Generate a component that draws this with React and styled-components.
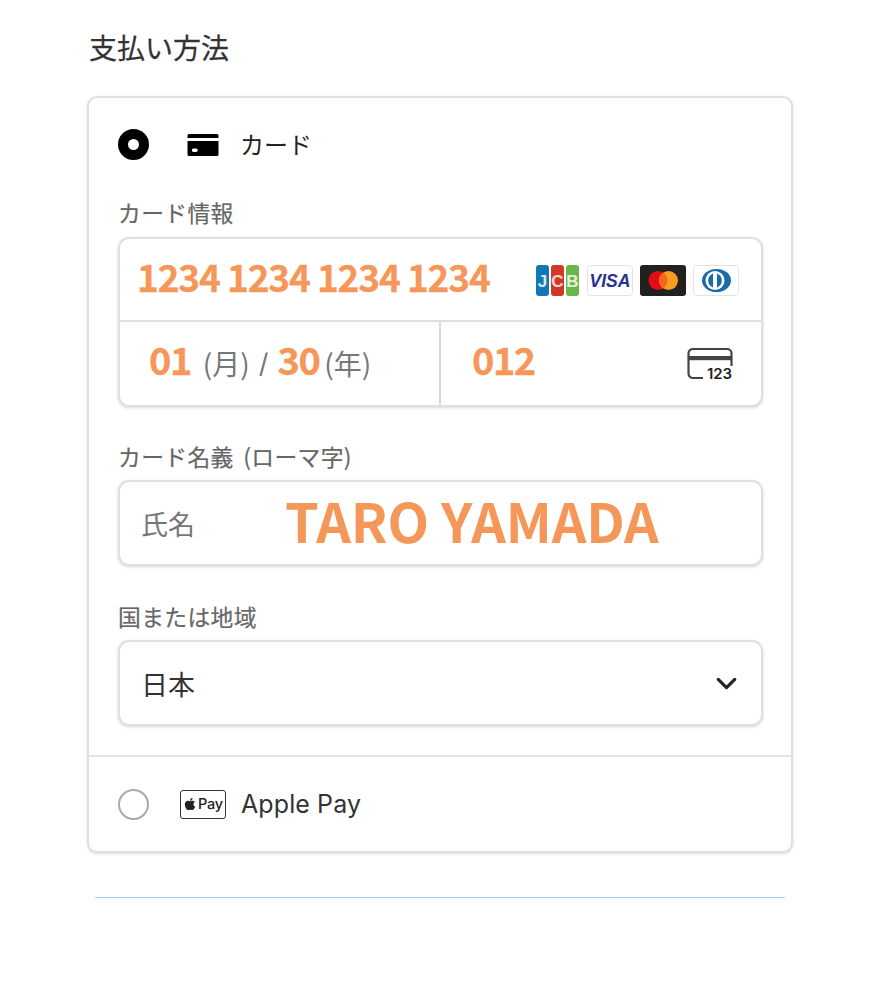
import React from "react";
import styled, { createGlobalStyle } from "styled-components";
import { FaApple } from "react-icons/fa";
import { FiChevronDown } from "react-icons/fi";

const Global = createGlobalStyle`
  html, body { margin: 0; padding: 0; background: #fff; }
  body { font-family: "Inter", "Noto Sans CJK JP", sans-serif; }
`;
const JP = `"Noto Sans CJK JP", sans-serif`;
const ORANGE = "#f6975a";

const Page = styled.div`
  width: 880px; height: 1000px; box-sizing: border-box; padding: 28px 87px 0 87px; overflow: hidden; background:#fff;
`;
const Title = styled.h1`
  margin: 0 0 30px 2px; font: 400 28px/38px ${JP}; color: #333; height: 38px; -webkit-text-stroke: 0.25px #333;
`;
const Card = styled.section`
  height: 757px; box-sizing: border-box; border: 2px solid #e0e0e0; border-radius: 10px;
  box-shadow: 0 1px 3px rgba(0,0,0,.14); background: #fff; display: flex; flex-direction: column;
`;
const CardBody = styled.div`
  height: 659px; box-sizing: border-box; padding: 31px 28px 0 29px; border-bottom: 2px solid #e4e4e4;
`;
const MethodRow = styled.div`
  display: flex; align-items: center; height: 31px; margin-bottom: 40px; color: #222;
  font: 400 24px/29px ${JP};
`;
const MethodName = styled.span`
  margin: 0 0 2px -1px;
`;
const RadioOn = styled.span`
  width: 31px; height: 31px; box-sizing: border-box; border-radius: 50%; border: 10px solid #000; background: #fff; margin-right: 38px; flex: none;
`;
const RadioOff = styled.span`
  width: 31px; height: 31px; box-sizing: border-box; border-radius: 50%; border: 2px solid #a9a9a9; background: #fff; flex: none;
`;
const CardGlyph = styled.svg`
  width: 32px; height: 24px; margin-right: 22px; flex: none;
`;
const Label = styled.div`
  font: 400 22.8px/26px ${JP}; color: #666; height: 26px; margin-bottom: ${p => p.$gap}px; white-space: nowrap;
  letter-spacing: 0.35px; word-spacing: 4px; -webkit-text-stroke: 0.2px #666;
`;
const Group = styled.div`
  border: 2px solid #e0e0e0; border-radius: 11px; box-shadow: 0 1px 3px rgba(0,0,0,.16); background: #fff;
  height: 170px; box-sizing: border-box; display: flex; flex-direction: column; margin-bottom: 37px;
`;
const NumberRow = styled.div`
  height: 83px; box-sizing: border-box; flex: none; border-bottom: 2px solid #e0e0e0; display: flex; align-items: center;
  justify-content: space-between; padding: 0 22px 0 17px;
`;
const BigNum = styled.span`
  color: ${ORANGE}; font: 700 ${p => p.$size || 37}px/1 ${JP}; letter-spacing: ${p => p.$track ?? -1.15}px; white-space: nowrap;
  margin: 0 0 ${p => p.$lift ?? 7}px ${p => p.$left || 0}px; -webkit-text-stroke: 0.3px ${ORANGE};
`;
const Logos = styled.div`
  display: flex; align-items: center; gap: 7px; margin-top: 2px;
`;
const Logo = styled.svg`
  width: 46px; height: 31px; display: block; flex: none;
`;
const SplitRow = styled.div`
  flex: 1; display: flex; min-height: 0;
`;
const Expiry = styled.div`
  width: 321px; box-sizing: border-box; border-right: 2px solid #dadada; display: flex; align-items: center; padding-left: 29px;
`;
const Hint = styled.span`
  color: #777; font: 400 28px/1 ${JP}; white-space: pre; margin: 0 0 2px ${p => p.$left || 0}px;
`;
const Slash = styled.span`
  color: #777; font: 400 27px/1 "Inter", sans-serif; margin-left: 9px;
`;
const Cvc = styled.div`
  flex: 1; display: flex; align-items: center; justify-content: space-between; padding: 0 28px 0 31px;
`;
const CvcIcon = styled.svg`
  width: 46px; height: 36px; display:block; margin-top: 5px; flex: none;
`;
const Field = styled.div`
  height: 86px; box-sizing: border-box; border: 2px solid #e0e0e0; border-radius: 11px; box-shadow: 0 1px 3px rgba(0,0,0,.16);
  display: flex; align-items: center; padding: 0 18px 0 21px; background:#fff; margin-bottom: ${p => p.$gap || 0}px; justify-content: ${p => p.$between ? "space-between" : "flex-start"};
`;
const Placeholder = styled.span`
  font: 400 27px/1 ${JP}; color: #777; width: 144px; flex: none;
`;
const NameValue = styled.span`
  font: 700 54px/1 ${JP}; color: ${ORANGE}; white-space: nowrap; letter-spacing: -0.1px; margin-bottom: 6px;
`;
const Value = styled.span`
  font: 400 27px/1 ${JP}; color: #333;
`;
const ApplePayRow = styled.div`
  flex: 1; display: flex; align-items: center; padding: 0 0 0 29px; font: 400 25px/1 "Inter", sans-serif; color: #333; letter-spacing: 0.1px;
`;
const PayMark = styled.span`
  width: 46px; height: 29px; box-sizing: border-box; border: 1.5px solid #333; border-radius: 3px; margin: 0 15px 0 31px;
  display: inline-flex; align-items: center; justify-content: center; gap: 1px; font: 500 14.5px/1 "Inter", sans-serif; color: #222; letter-spacing: -0.2px;
`;
const BlueLine = styled.div`
  height: 1px; background: #a8d2f0; margin: 44px 8px 0 8px;
`;

export default function App() {
  return (
    <Page>
      <Global />
      <Title>支払い方法</Title>
      <Card>
        <CardBody>
          <MethodRow>
            <RadioOn />
            <CardGlyph viewBox="0 0 32 24">
              <path fill="#000" d="M2 1h28a1.5 1.5 0 0 1 1.5 1.5V5H.5V2.5A1.5 1.5 0 0 1 2 1z" />
              <path fill="#000" fillRule="evenodd" d="M.5 8h31v13.5a1.5 1.5 0 0 1-1.5 1.5H2a1.5 1.5 0 0 1-1.5-1.5zM6.5 15.5a1.7 1.7 0 0 0 0 3.4h2.5a1.7 1.7 0 0 0 0-3.4z" />
            </CardGlyph>
            <MethodName>カード</MethodName>
          </MethodRow>
          <Label $gap={11}>カード情報</Label>
          <Group>
            <NumberRow>
              <BigNum>1234 1234 1234 1234</BigNum>
              <Logos>
                <Logo viewBox="0 0 46 31">
                  <rect x="2" y="0" width="13" height="31" rx="3" fill="#1178b4" />
                  <rect x="17" y="0" width="13" height="31" rx="3" fill="#cf3a24" />
                  <rect x="32" y="0" width="13" height="31" rx="3" fill="#6ab64a" />
                  <text x="8.5" y="22" textAnchor="middle" fontFamily="Liberation Sans" fontWeight="700" fontSize="17" fill="#dcebf4">J</text>
                  <text x="23.5" y="22" textAnchor="middle" fontFamily="Liberation Sans" fontWeight="700" fontSize="17" fill="#f3d6cf">C</text>
                  <text x="38.5" y="22" textAnchor="middle" fontFamily="Liberation Sans" fontWeight="700" fontSize="17" fill="#e4f2dc">B</text>
                </Logo>
                <Logo viewBox="0 0 46 31">
                  <rect x=".5" y=".5" width="45" height="30" rx="3" fill="#fff" stroke="#dfe3e6" />
                  <text x="23" y="21.5" textAnchor="middle" fontFamily="Liberation Sans" fontWeight="700" fontStyle="italic" fontSize="17.5" fill="#25338f">VISA</text>
                </Logo>
                <Logo viewBox="0 0 46 31">
                  <rect width="46" height="31" rx="3" fill="#23211f" />
                  <circle cx="18" cy="15.5" r="9.5" fill="#e30d17" />
                  <circle cx="28.5" cy="15.5" r="9.5" fill="#f59d1e" />
                  <path d="M23.2 7.6a9.5 9.5 0 0 1 0 15.8a9.5 9.5 0 0 1 0-15.8z" fill="#f4661c" />
                </Logo>
                <Logo viewBox="0 0 46 31">
                  <rect x=".5" y=".5" width="45" height="30" rx="3" fill="#fff" stroke="#dfe3e6" />
                  <ellipse cx="23.5" cy="15.5" rx="14.5" ry="11.5" fill="#1a6aa5" />
                  <circle cx="22" cy="15.5" r="9.5" fill="#fff" />
                  <path d="M20 8.5a7.5 7.5 0 0 0 0 14zM24 8.5a7.5 7.5 0 0 1 0 14z" fill="#1a6aa5" />
                </Logo>
              </Logos>
            </NumberRow>
            <SplitRow>
              <Expiry>
                <BigNum $size={38} $track={-1.5} $lift={9}>01</BigNum>
                <Hint $left={12}>(月)</Hint>
                <Slash>/</Slash>
                <BigNum $size={38} $track={-1.5} $lift={9} $left={9}>30</BigNum>
                <Hint $left={5}>(年)</Hint>
              </Expiry>
              <Cvc>
                <BigNum $size={38} $track={-1.5} $lift={9}>012</BigNum>
                <CvcIcon viewBox="0 0 46 36">
                  <path d="M16 30H6a4.5 4.5 0 0 1-4.5-4.5V5.5A4.5 4.5 0 0 1 6 1h34a4.5 4.5 0 0 1 4.5 4.5V18" fill="none" stroke="#444" strokeWidth="2.2" />
                  <rect x="1.5" y="8" width="43" height="4.2" fill="#444" />
                  <text x="32.5" y="31" textAnchor="middle" fontFamily="Inter, sans-serif" fontWeight="600" fontSize="15" fill="#222">123</text>
                </CvcIcon>
              </Cvc>
            </SplitRow>
          </Group>
          <Label $gap={10}>カード名義 (ローマ字)</Label>
          <Field $gap={38}>
            <Placeholder>氏名</Placeholder>
            <NameValue>TARO YAMADA</NameValue>
          </Field>
          <Label $gap={10}>国または地域</Label>
          <Field $between>
            <Value>日本</Value>
            <FiChevronDown size={33} color="#222" strokeWidth={2.3} />
          </Field>
        </CardBody>
        <ApplePayRow>
          <RadioOff />
          <PayMark>
            <FaApple size={14} />
            Pay
          </PayMark>
          Apple Pay
        </ApplePayRow>
      </Card>
      <BlueLine />
    </Page>
  );
}
